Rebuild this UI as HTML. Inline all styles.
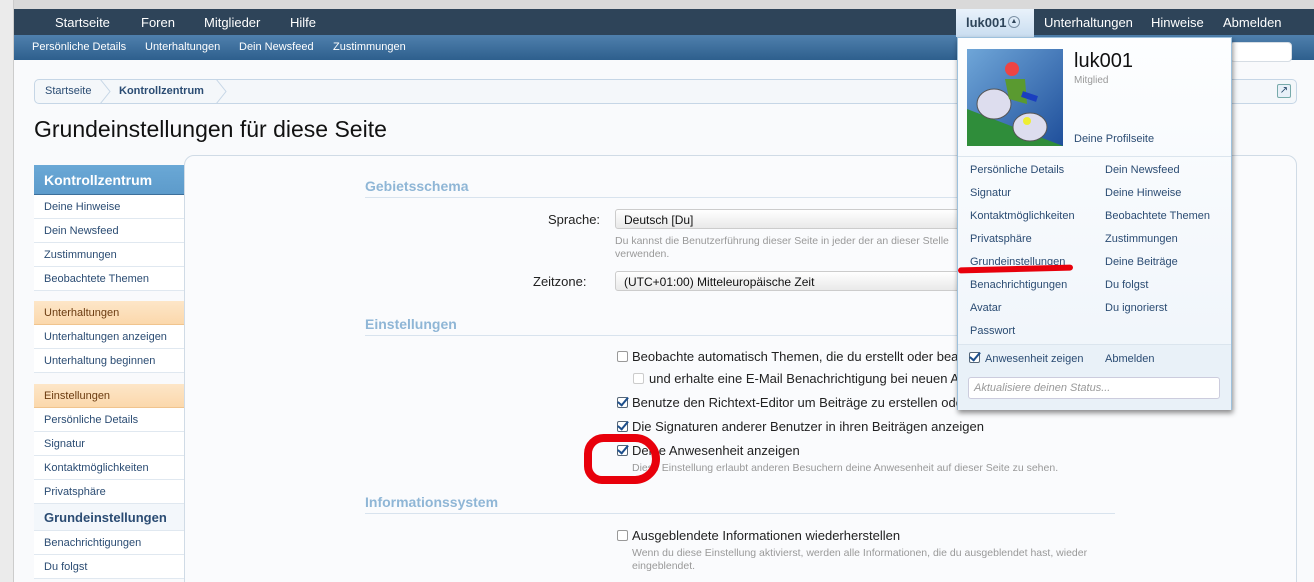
<!DOCTYPE html>
<html><head><meta charset="utf-8"><style>
*{box-sizing:border-box;margin:0;padding:0}
html,body{width:1314px;height:582px;overflow:hidden}
body{background:#f9fafc;font-family:"Liberation Sans",Arial,sans-serif;position:relative}
.a{position:absolute;white-space:nowrap}
.side div.it{position:absolute;left:0;width:150px;height:24px;border-bottom:1px solid #e0e8f0;background:#fff;color:#2b4c73;font-size:11px;padding-left:10px;line-height:24px}
.side div.hd{position:absolute;left:0;width:150px;height:24px;background:linear-gradient(#fde6c8,#fbd8ac);border-bottom:1px solid #f0c48e;color:#6b3b10;font-size:11px;padding-left:10px;line-height:24px}
.sec{position:absolute;left:365px;width:750px;border-bottom:1px solid #d8e3ee;color:#8fb6d6;font-weight:bold;font-size:14px;height:20px}
.cb{position:absolute;width:11px;height:11px;border:1px solid #999;border-radius:2px;background:#fff}
.ck{position:absolute;width:11px;height:11px;border:1px solid #567;border-radius:2px;background:#fff}
.ck:after{content:"";position:absolute;left:2px;top:-3px;width:4px;height:9px;border:solid #1d4f8c;border-width:0 2px 2px 0;transform:rotate(40deg)}
.t13{font-size:13px;color:#222}
.hint{font-size:10.5px;color:#999}
.sel{position:absolute;left:615px;width:360px;height:20px;border:1px solid #ccc;border-radius:3px;background:linear-gradient(#fff,#e9e9e9);font-size:12px;color:#111;padding:3px 8px}
.dd a{position:absolute;color:#2b4c73;font-size:11px;text-decoration:none}
</style></head><body>
<div class="a" style="left:0;top:0;width:1314px;height:9px;background:#d9d9d9"></div>
<div class="a" style="left:0;top:0;width:14px;height:582px;background:#ebebeb;border-right:1px solid #ccc"></div>
<div class="a" style="left:14px;top:9px;width:1300px;height:26px;background:#2e4459"></div>
<div class="a" style="left:14px;top:35px;width:1300px;height:25px;background:linear-gradient(#4f80ad,#2e5f8d)"></div>
<div class="a" style="top:15px;left:55px;color:#fff;font-size:13px">Startseite</div>
<div class="a" style="top:15px;left:141px;color:#fff;font-size:13px">Foren</div>
<div class="a" style="top:15px;left:204px;color:#fff;font-size:13px">Mitglieder</div>
<div class="a" style="top:15px;left:290px;color:#fff;font-size:13px">Hilfe</div>
<div class="a" style="top:15px;left:1044px;color:#fff;font-size:13px">Unterhaltungen</div>
<div class="a" style="top:15px;left:1151px;color:#fff;font-size:13px">Hinweise</div>
<div class="a" style="top:15px;left:1223px;color:#fff;font-size:13px">Abmelden</div>
<div class="a" style="top:41px;left:32px;color:#fff;font-size:11px">Persönliche Details</div>
<div class="a" style="top:41px;left:145px;color:#fff;font-size:11px">Unterhaltungen</div>
<div class="a" style="top:41px;left:239px;color:#fff;font-size:11px">Dein Newsfeed</div>
<div class="a" style="top:41px;left:333px;color:#fff;font-size:11px">Zustimmungen</div>
<div class="a" style="left:14px;top:60px;width:1284px;height:522px;background:#f9fafc;border-radius:0 6px 0 0"></div>
<div class="a" style="left:1230px;top:42px;width:62px;height:20px;background:#fff;border:1px solid #d6dde4;border-radius:4px"></div>
<div class="a" style="left:34px;top:79px;width:1263px;height:25px;border:1px solid #c6d6e6;border-radius:5px;background:#f4f7fa"></div>
<div class="a" style="left:45px;top:85px;font-size:11px;color:#2b4c73">Startseite</div>
<div class="a" style="left:119px;top:85px;font-size:11px;color:#2b4c73;font-weight:bold">Kontrollzentrum</div>
<svg class="a" style="left:98px;top:79px" width="140" height="25"><path d="M2 0 L12 12.5 L2 25 M118 0 L128 12.5 L118 25" fill="none" stroke="#c6d6e6"/></svg>
<div class="a" style="left:1277px;top:84px;width:14px;height:14px;border:1px solid #7aa;border-radius:2px;background:#e8f0f8;font-size:10px;color:#246;text-align:center;line-height:12px">↗</div>
<div class="a" style="left:34px;top:116px;font-size:23px;color:#111">Grundeinstellungen für diese Seite</div>
<div class="a" style="left:184px;top:155px;width:1113px;height:440px;border:1px solid #d0dbe6;border-radius:10px 10px 0 0;background:#fafbfd"></div>
<div class="a side" style="left:34px;top:165px;width:150px">
<div style="position:absolute;left:0;top:0;width:150px;height:30px;background:linear-gradient(#6aa8d6,#5d9bcb);border-bottom:1px solid #3d6f9a;color:#fff;font-weight:bold;font-size:14px;padding:7px 0 0 10px">Kontrollzentrum</div>
<div class="it" style="top:30px">Deine Hinweise</div>
<div class="it" style="top:54px">Dein Newsfeed</div>
<div class="it" style="top:78px">Zustimmungen</div>
<div class="it" style="top:102px">Beobachtete Themen</div>
<div class="hd" style="top:136px">Unterhaltungen</div>
<div class="it" style="top:160px">Unterhaltungen anzeigen</div>
<div class="it" style="top:184px">Unterhaltung beginnen</div>
<div class="hd" style="top:219px">Einstellungen</div>
<div class="it" style="top:243px">Persönliche Details</div>
<div class="it" style="top:267px">Signatur</div>
<div class="it" style="top:291px">Kontaktmöglichkeiten</div>
<div class="it" style="top:315px">Privatsphäre</div>
<div class="it" style="top:339px;height:27px;background:#f3f7fb;font-weight:bold;font-size:13px;line-height:27px">Grundeinstellungen</div>
<div class="it" style="top:366px">Benachrichtigungen</div>
<div class="it" style="top:390px">Du folgst</div>
</div>
<div class="sec" style="top:178px">Gebietsschema</div>
<div class="a t13" style="left:548px;top:212px">Sprache:</div>
<div class="sel" style="top:209px">Deutsch [Du]</div>
<div class="a hint" style="left:615px;top:235px">Du kannst die Benutzerführung dieser Seite in jeder der an dieser Stelle</div>
<div class="a hint" style="left:615px;top:248px">verwenden.</div>
<div class="a t13" style="left:533px;top:274px">Zeitzone:</div>
<div class="sel" style="top:271px">(UTC+01:00) Mitteleuropäische Zeit</div>
<div class="sec" style="top:316px">Einstellungen</div>
<div class="cb" style="left:617px;top:351px"></div><div class="a t13" style="left:632px;top:349px">Beobachte automatisch Themen, die du erstellt oder bearbeitest</div>
<div class="cb" style="left:633px;top:373px;border-color:#ccc"></div><div class="a t13" style="left:649px;top:371px">und erhalte eine E-Mail Benachrichtigung bei neuen Antworten</div>
<div class="ck" style="left:617px;top:397px"></div><div class="a t13" style="left:632px;top:395px">Benutze den Richtext-Editor um Beiträge zu erstellen oder zu bearbeiten</div>
<div class="ck" style="left:617px;top:421px"></div><div class="a t13" style="left:632px;top:419px">Die Signaturen anderer Benutzer in ihren Beiträgen anzeigen</div>
<div class="ck" style="left:617px;top:445px"></div><div class="a t13" style="left:632px;top:443px">Deine Anwesenheit anzeigen</div>
<div class="a hint" style="left:632px;top:462px">Diese Einstellung erlaubt anderen Besuchern deine Anwesenheit auf dieser Seite zu sehen.</div>
<div class="a" style="left:584px;top:434px;width:76px;height:50px;border:8px solid #e8000b;border-radius:22px 28px 28px 20px"></div>
<div class="sec" style="top:494px">Informationssystem</div>
<div class="cb" style="left:617px;top:530px"></div><div class="a t13" style="left:632px;top:528px">Ausgeblendete Informationen wiederherstellen</div>
<div class="a hint" style="left:632px;top:547px">Wenn du diese Einstellung aktivierst, werden alle Informationen, die du ausgeblendet hast, wieder</div>
<div class="a hint" style="left:632px;top:560px">eingeblendet.</div>
<div class="a" style="left:956px;top:9px;width:78px;height:28px;background:linear-gradient(#e9f2fb,#c9ddf0)"></div>
<div class="a" style="left:966px;top:15px;font-size:13px;color:#2e4459;font-weight:bold">luk001</div>
<div class="a" style="left:1008px;top:16px;width:12px;height:12px;border:1px solid #7a8fa4;border-radius:50%;font-size:7px;line-height:10px;text-align:center;color:#2e4459">▲</div>
<div class="a dd" style="left:957px;top:37px;width:275px;height:373px;background:linear-gradient(#fdfeff,#eef4fa);border:1px solid #9dc1dd;box-shadow:1px 3px 5px rgba(0,0,0,.45)">
<svg style="position:absolute;left:9px;top:11px" width="96" height="97"><defs><linearGradient id="g" x1="0" y1="0" x2="1" y2="1"><stop offset="0" stop-color="#6fa6d8"/><stop offset="1" stop-color="#1f4f9b"/></linearGradient></defs><rect width="96" height="97" fill="url(#g)"/><path d="M0 60 L96 97 L0 97Z" fill="#2f8d3a"/><ellipse cx="27" cy="55" rx="17" ry="15" fill="#dde" stroke="#555"/><ellipse cx="63" cy="78" rx="17" ry="14" fill="#dde" stroke="#555"/><path d="M38 30 L58 30 L60 55 L42 50Z" fill="#5a9a30"/><circle cx="45" cy="20" r="7" fill="#e44"/><path d="M55 45 L70 50" stroke="#1a3fbf" stroke-width="6"/><circle cx="60" cy="72" r="4" fill="#ee3"/></svg>
<div style="position:absolute;left:116px;top:12px;font-size:20px;color:#111">luk001</div>
<div style="position:absolute;left:116px;top:37px;font-size:10px;color:#999">Mitglied</div>
<a style="left:116px;top:95px">Deine Profilseite</a>
<div style="position:absolute;left:0;top:118px;width:273px;border-top:1px solid #dbe5ee"></div>
<a style="left:12px;top:126px">Persönliche Details</a><a style="left:147px;top:126px">Dein Newsfeed</a>
<a style="left:12px;top:149px">Signatur</a><a style="left:147px;top:149px">Deine Hinweise</a>
<a style="left:12px;top:172px">Kontaktmöglichkeiten</a><a style="left:147px;top:172px">Beobachtete Themen</a>
<a style="left:12px;top:195px">Privatsphäre</a><a style="left:147px;top:195px">Zustimmungen</a>
<a style="left:12px;top:218px">Grundeinstellungen</a><a style="left:147px;top:218px">Deine Beiträge</a>
<a style="left:12px;top:241px">Benachrichtigungen</a><a style="left:147px;top:241px">Du folgst</a>
<a style="left:12px;top:264px">Avatar</a><a style="left:147px;top:264px">Du ignorierst</a>
<a style="left:12px;top:287px">Passwort</a>
<div style="position:absolute;left:0;top:228px;width:115px;height:6px;background:#e8000b;border-radius:4px;transform:rotate(-1.5deg)"></div>
<div style="position:absolute;left:0;top:306px;width:273px;height:66px;border-top:1px solid #dbe5ee;background:#e9f1f8"></div>
<div class="ck" style="left:11px;top:314px"></div><a style="left:27px;top:315px">Anwesenheit zeigen</a><a style="left:147px;top:315px">Abmelden</a>
<div style="position:absolute;left:10px;top:339px;width:252px;height:22px;background:#fff;border:1px solid #ccd;border-radius:3px;font-size:11px;color:#999;font-style:italic;padding:4px 5px">Aktualisiere deinen Status...</div>
</div>
</body></html>
